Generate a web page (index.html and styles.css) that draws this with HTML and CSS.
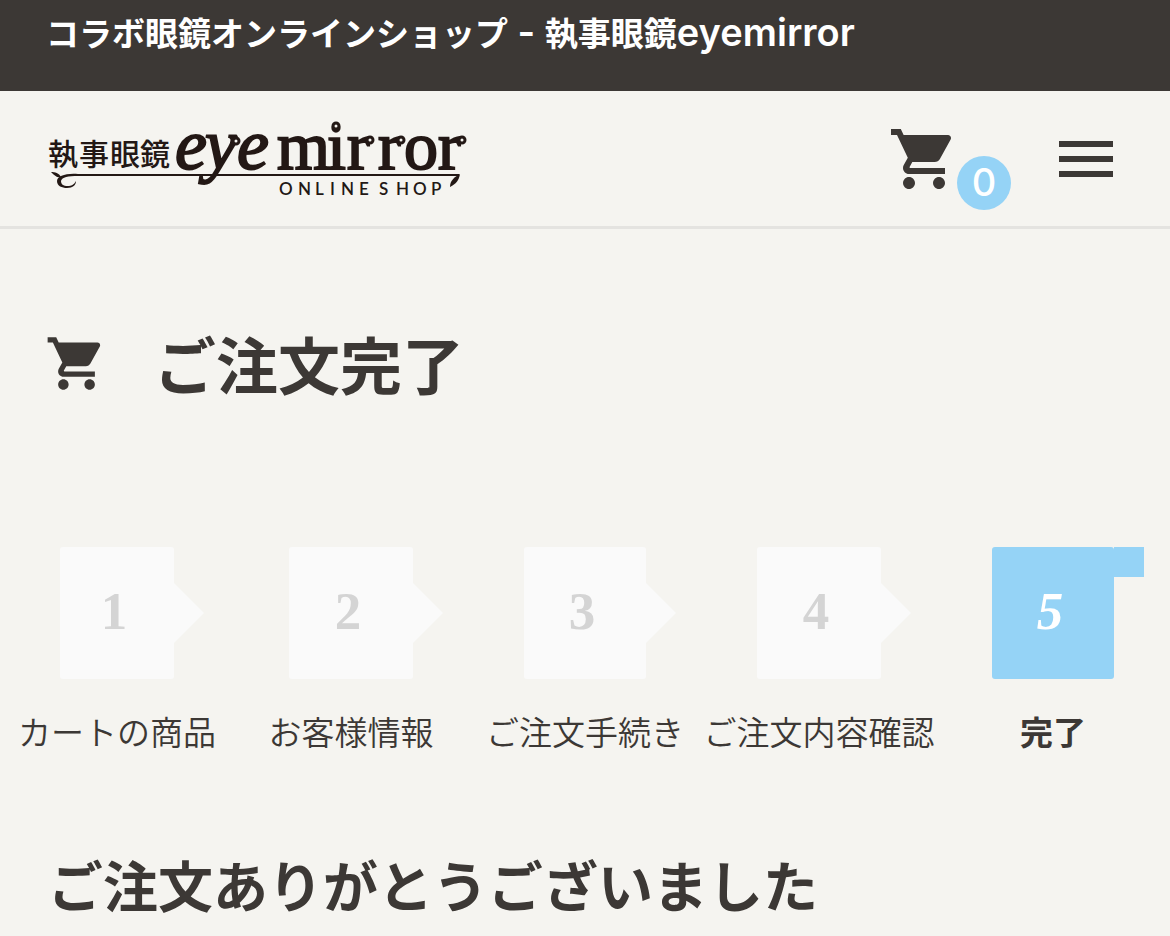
FILE: index.html
```html
<!DOCTYPE html>
<html lang="ja">
<head>
    <meta charset="UTF-8">
    <meta name="viewport" content="width=device-width, initial-scale=1.0">
    <title>ご注文完了 - 執事眼鏡eyemirror</title>
    <link rel="stylesheet" href="styles.css">
</head>
<body>
    <div class="site-desc">コラボ眼鏡オンラインショップ<span class="latin"> - </span>執事眼鏡<span class="latin">eyemirror</span></div>

    <header class="header">
        <a href="#" class="logo" aria-label="執事眼鏡 eye mirror ONLINE SHOP">
            <svg width="422" height="111" viewBox="0 -16 422 111">
                <text class="logo-kanji" x="0 31 62 92" y="46">執事眼鏡</text>
                <text class="logo-eye" x="127 157 189" y="50">eye</text>
                <text class="logo-mirror" x="229 279 299 330 356 390" y="50">mirror</text>
                <text class="logo-shop" x="231 250 267 282 293 311 331 348 365 383" y="76">ONLINESHOP</text>
                <!-- branch under the name -->
                <path d="M25 56H411" stroke-width="2" class="logo-line"/>
                <path d="M30 55C18 54 9 57 9 62C9 67 14 69 19 69C25 69 28 66 28 62C26 66 23 67 20 67C15 67 13 65 13 62C14 58 20 57 30 57Z"/>
                <path d="M3 53C7 53 11 54 13 58C9 59 7 57 3 53Z"/>
                <path d="M412 55C411 61 408 65 402 68C402 62 406 58 412 55Z"/>
                <!-- curls -->
                <circle cx="288" cy="7" r="3" class="logo-curl"/>
                <circle cx="188" cy="22" r="3" class="logo-curl"/>
                <circle cx="322" cy="21" r="3" class="logo-curl"/>
                <circle cx="353" cy="21" r="3" class="logo-curl"/>
                <circle cx="414" cy="21" r="3" class="logo-curl"/>
            </svg>
        </a>
        <nav class="header-nav">
            <a href="#" class="cart" aria-label="カート">
                <svg class="icon" viewBox="0 0 24 24"><path d="M7 18c-1.1 0-1.99.9-1.99 2S5.900 22 7 22s2-.9 2-2-.9-2-2-2zM1 2v2h2l3.600 7.590-1.350 2.450c-.16.28-.25.61-.25.960 0 1.100.9 2 2 2h12v-2H7.420c-.14 0-.25-.11-.25-.25l.03-.12.9-1.630h7.450c.75 0 1.410-.41 1.750-1.030l3.580-6.490c.08-.14.12-.31.12-.48 0-.55-.45-1-1-1H5.210l-.94-2H1zm16 16c-1.100 0-1.990.9-1.990 2s.89 2 1.990 2 2-.9 2-2-.9-2-2-2z"/></svg>
                <span class="badge">0</span>
            </a>
            <button type="button" class="menu-btn" aria-label="メニュー">
                <svg class="icon" viewBox="0 0 24 24"><path d="M3 18h18v-2H3v2zm0-5h18v-2H3v2zm0-7v2h18V6H3z"/></svg>
            </button>
        </nav>
    </header>

    <main>
        <h1 class="page-title">
            <svg class="title-icon" viewBox="0 0 24 24"><path d="M7 18c-1.1 0-1.99.9-1.99 2S5.900 22 7 22s2-.9 2-2-.9-2-2-2zM1 2v2h2l3.600 7.590-1.350 2.450c-.16.28-.25.61-.25.960 0 1.100.9 2 2 2h12v-2H7.420c-.14 0-.25-.11-.25-.25l.03-.12.9-1.630h7.450c.75 0 1.410-.41 1.750-1.030l3.580-6.490c.08-.14.12-.31.12-.48 0-.55-.45-1-1-1H5.210l-.94-2H1zm16 16c-1.100 0-1.990.9-1.990 2s.89 2 1.990 2 2-.9 2-2-.9-2-2-2z"/></svg>
            ご注文完了
        </h1>

        <ol class="steps">
            <li class="step"><span class="step-num">1</span><span class="step-label">カートの商品</span></li>
            <li class="step"><span class="step-num">2</span><span class="step-label">お客様情報</span></li>
            <li class="step"><span class="step-num">3</span><span class="step-label">ご注文手続き</span></li>
            <li class="step"><span class="step-num">4</span><span class="step-label">ご注文内容確認</span></li>
            <li class="step current"><span class="step-num">5</span><span class="step-label">完了</span></li>
        </ol>

        <h2 class="thanks">ご注文ありがとうございました</h2>
    </main>
</body>
</html>
```
FILE: styles.css
```css
* {
    margin: 0;
    padding: 0;
    box-sizing: border-box;
}

body {
    font-family: "Noto Sans CJK JP", sans-serif;
    font-size: 33px;
    background-color: #f5f4f0;
    color: #3c3835;
}

.site-desc {
    padding: 8px 46px 35px;
    line-height: 48px;
    font-weight: 700;
    background: #3c3835;
    color: #fff;
}

.latin {
    font-family: Inter, sans-serif;
    font-size: 38px;
    font-weight: 600;
    line-height: 1;
}

.header {
    display: flex;
    align-items: center;
    justify-content: space-between;
    padding: 12px 48px;
    border-bottom: 3px solid #e4e3e0;
}

.logo svg {
    display: block;
    fill: #231815;
}

.logo-kanji {
    font-size: 30px;
    font-weight: 500;
}

.logo-eye,
.logo-mirror {
    font-family: "Liberation Serif", serif;
    stroke: #231815;
    stroke-width: 2px;
}

.logo-eye {
    font-size: 72px;
    font-style: italic;
}

.logo-mirror {
    font-size: 68px;
}

.logo-shop {
    font-family: Lato, sans-serif;
    font-size: 17px;
    font-weight: 600;
}

.logo-line {
    stroke: #231815;
}

.logo-curl {
    fill: #f5f4f0;
    stroke: #231815;
    stroke-width: 3px;
}

.header-nav {
    display: flex;
    gap: 90px;
}

.cart {
    position: relative;
    color: inherit;
}

.icon {
    display: block;
    width: 72px;
    height: 72px;
    fill: currentColor;
}

.badge {
    position: absolute;
    left: 69px;
    top: 33px;
    width: 54px;
    height: 54px;
    border-radius: 50%;
    background: #95d3f6;
    color: #fff;
    font-family: Inter, sans-serif;
    font-size: 38px;
    font-weight: 500;
    line-height: 52px;
    text-align: center;
}

.menu-btn {
    border: none;
    background: none;
    color: inherit;
    cursor: pointer;
}

.page-title {
    display: flex;
    align-items: center;
    gap: 46px;
    padding: 90px 45px 0;
    font-size: 62px;
    line-height: 88px;
}

.title-icon {
    width: 63px;
    height: 63px;
    fill: currentColor;
}

.steps {
    display: flex;
    margin-top: 140px;
    list-style: none;
}

.step {
    flex: 1 1 0;
    display: flex;
    flex-direction: column;
    align-items: center;
    gap: 28px;
}

.step-num {
    position: relative;
    width: 122px;
    height: 132px;
    padding-right: 6px;
    border-radius: 3px;
    background: #fafafa;
    color: #d4d4d4;
    font-family: "Liberation Serif", serif;
    font-size: 53px;
    font-weight: 700;
    line-height: 128px;
    text-align: center;
}

.step:first-child .step-num {
    width: 114px;
}

.step:nth-child(even) .step-num {
    width: 124px;
}

/* arrow to the next step */
.step-num::after {
    content: "";
    position: absolute;
    left: 100%;
    top: 36px;
    border: 30px solid transparent;
    border-left-color: #fafafa;
    border-right: none;
}

.step-label {
    font-weight: 350;
    line-height: 48px;
    white-space: nowrap;
}

.current .step-num {
    background: #95d3f6;
    color: #fff;
    font-style: italic;
}

.current .step-num::after {
    top: 0;
    width: 30px;
    height: 30px;
    border: none;
    background: #95d3f6;
}

.current .step-label {
    font-weight: 700;
}

.thanks {
    padding: 88px 48px 0;
    font-size: 55px;
    line-height: 80px;
}
```
